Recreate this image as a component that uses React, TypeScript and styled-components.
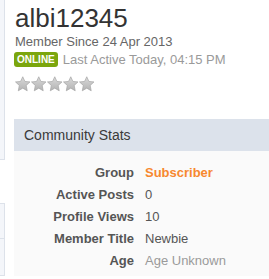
import React from "react";
import styled, { createGlobalStyle } from "styled-components";

const Global = createGlobalStyle`
  html, body { margin: 0; padding: 0; background: #ffffff; }
  body { font-family: "Liberation Sans", Arial, sans-serif; overflow: hidden; }
`;

const Page = styled.div`
  display: flex;
  width: 269px;
  height: 279px;
  overflow: hidden;
`;

const Side = styled.div`
  width: 5px;
  flex: none;
  display: flex;
  flex-direction: column;
`;

const SideBox = styled.div<{ $h: number; $top?: boolean }>`
  height: ${(p) => p.$h}px;
  flex: none;
  background: #f4f6fa;
  border-right: 1px solid #dde2ea;
  border-bottom: 1px solid #dde2ea;
  border-top: ${(p) => (p.$top ? "1px solid #dde2ea" : "none")};
  box-sizing: border-box;
`;

const SideGap = styled.div<{ $h: number }>`
  height: ${(p) => p.$h}px;
  flex: none;
`;

const Main = styled.div`
  flex: 1;
  padding: 3px 0 0 9px;
  display: flex;
  flex-direction: column;
`;

const Name = styled.h1`
  margin: 0;
  font-size: 26px;
  line-height: 30px;
  font-weight: normal;
  color: #333333;
  padding-left: 1px;
`;

const Since = styled.div`
  margin-top: 1px;
  font-size: 13px;
  line-height: 16px;
  color: #666666;
  padding-left: 1px;
`;

const StatusRow = styled.div`
  margin-top: 1px;
  display: flex;
  align-items: center;
  gap: 5px;
  height: 17px;
`;

const Badge = styled.span`
  display: inline-block;
  background: #7ba60d;
  color: #ffffff;
  font-size: 10px;
  font-weight: bold;
  line-height: 15px;
  height: 15px;
  padding: 0 3px;
  border-radius: 3px;
`;

const LastActive = styled.span`
  font-size: 13px;
  color: #9a9a9a;
  line-height: 16px;
`;

const Stars = styled.div`
  margin-top: 8px;
  display: flex;
  gap: 0.5px;
  padding-left: 1px;
  height: 16px;
`;

const Panel = styled.section`
  margin-top: 27px;
  background: #fafafa;
  display: flex;
  flex-direction: column;
  padding-bottom: 4px;
`;

const PanelHead = styled.h3`
  margin: 0;
  height: 32px;
  display: flex;
  align-items: center;
  padding-left: 10px;
  background: #dce2eb;
  font-size: 14px;
  font-weight: normal;
  color: #3a3a3a;
`;

const Rows = styled.dl`
  margin: 11px 0 0 0;
  display: grid;
  grid-template-columns: 120px 1fr;
  column-gap: 11px;
  grid-auto-rows: 22px;
  align-items: center;
`;

const Label = styled.dt`
  text-align: right;
  font-size: 13px;
  font-weight: bold;
  color: #555555;
  line-height: 22px;
`;

const Value = styled.dd<{ $kind?: "group" | "muted" }>`
  margin: 0;
  font-size: 13px;
  line-height: 22px;
  font-weight: ${(p) => (p.$kind === "group" ? "bold" : "normal")};
  color: ${(p) =>
    p.$kind === "group" ? "#f7882f" : p.$kind === "muted" ? "#9a9a9a" : "#555555"};
`;

const Star = () => (
  <svg width="15.5" height="16" viewBox="0 0 24 24">
    <defs>
      <linearGradient id="sg" x1="0" y1="0" x2="0" y2="1">
        <stop offset="0" stopColor="#dadada" />
        <stop offset="1" stopColor="#b3b3b3" />
      </linearGradient>
    </defs>
    <polygon
      points="12,0.8 15.3,8 23.2,8.8 17.3,14.2 18.9,22.5 12,18.4 5.1,22.5 6.7,14.2 0.8,8.8 8.7,8"
      fill="url(#sg)"
      stroke="#a6a6a6"
      strokeWidth="1.1"
      strokeLinejoin="round"
    />
  </svg>
);

const stats: { label: string; value: string; kind?: "group" | "muted" }[] = [
  { label: "Group", value: "Subscriber", kind: "group" },
  { label: "Active Posts", value: "0" },
  { label: "Profile Views", value: "10" },
  { label: "Member Title", value: "Newbie" },
  { label: "Age", value: "Age Unknown", kind: "muted" },
];

export default function App() {
  return (
    <>
      <Global />
      <Page>
        <Side>
          <SideBox $h={160} />
          <SideGap $h={43} />
          <SideBox $h={36} $top />
          <SideBox $h={37} />
        </Side>
        <Main>
          <Name>albi12345</Name>
          <Since>Member Since 24 Apr 2013</Since>
          <StatusRow>
            <Badge>ONLINE</Badge>
            <LastActive>Last Active Today, 04:15 PM</LastActive>
          </StatusRow>
          <Stars>
            {[0, 1, 2, 3, 4].map((i) => (
              <Star key={i} />
            ))}
          </Stars>
          <Panel>
            <PanelHead>Community Stats</PanelHead>
            <Rows>
              {stats.map((s) => (
                <React.Fragment key={s.label}>
                  <Label>{s.label}</Label>
                  <Value $kind={s.kind}>{s.value}</Value>
                </React.Fragment>
              ))}
            </Rows>
          </Panel>
        </Main>
      </Page>
    </>
  );
}
